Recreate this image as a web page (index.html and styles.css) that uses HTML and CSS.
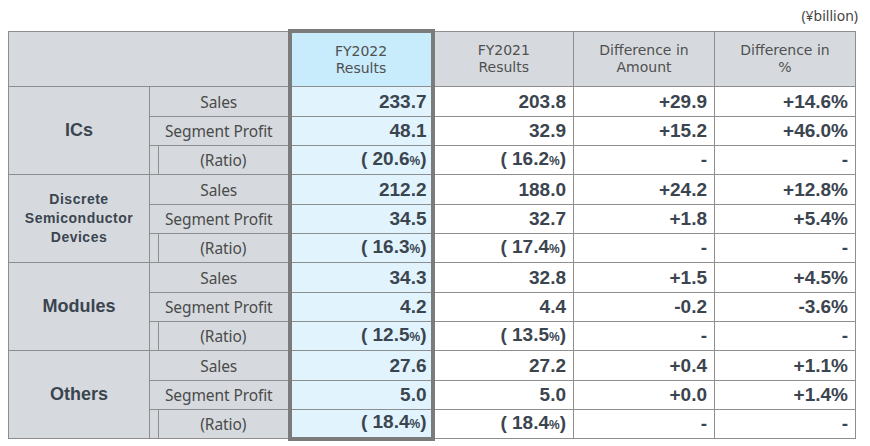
FILE: index.html
```html
<!DOCTYPE html>
<html lang="en">
<head>
<meta charset="utf-8">
<title>Segment Results</title>
<link rel="stylesheet" href="styles.css">
</head>
<body>
<div class="page">
  <div class="unit">(¥billion)</div>
  <table class="results">
    <colgroup>
      <col class="c-cat">
      <col class="c-ind">
      <col class="c-lab">
      <col class="c-hl">
      <col class="c-num">
      <col class="c-num">
      <col class="c-num">
    </colgroup>
    <thead>
      <tr class="head">
        <th colspan="3" class="blank"></th>
        <th class="hl hl-top"><span class="ln">FY2022</span><span class="ln">Results</span></th>
        <th><span class="ln">FY2021</span><span class="ln">Results</span></th>
        <th><span class="ln">Difference in</span><span class="ln">Amount</span></th>
        <th><span class="ln">Difference in</span><span class="ln">%</span></th>
      </tr>
    </thead>
    <tbody>
      <tr class="first">
        <th rowspan="3" class="cat">ICs</th>
        <td colspan="2" class="lab">Sales</td>
        <td class="num hl">233.7</td>
        <td class="num">203.8</td>
        <td class="num">+29.9</td>
        <td class="num">+14.6%</td>
      </tr>
      <tr>
        <td colspan="2" class="lab">Segment Profit</td>
        <td class="num hl">48.1</td>
        <td class="num">32.9</td>
        <td class="num">+15.2</td>
        <td class="num">+46.0%</td>
      </tr>
      <tr>
        <td class="ind"></td>
        <td class="lab">(Ratio)</td>
        <td class="num hl">( 20.6<small>%</small>)</td>
        <td class="num">( 16.2<small>%</small>)</td>
        <td class="num">-</td>
        <td class="num">-</td>
      </tr>

      <tr class="first">
        <th rowspan="3" class="cat cat-small"><span class="ln">Discrete</span><span class="ln">Semiconductor</span><span class="ln">Devices</span></th>
        <td colspan="2" class="lab">Sales</td>
        <td class="num hl">212.2</td>
        <td class="num">188.0</td>
        <td class="num">+24.2</td>
        <td class="num">+12.8%</td>
      </tr>
      <tr>
        <td colspan="2" class="lab">Segment Profit</td>
        <td class="num hl">34.5</td>
        <td class="num">32.7</td>
        <td class="num">+1.8</td>
        <td class="num">+5.4%</td>
      </tr>
      <tr>
        <td class="ind"></td>
        <td class="lab">(Ratio)</td>
        <td class="num hl">( 16.3<small>%</small>)</td>
        <td class="num">( 17.4<small>%</small>)</td>
        <td class="num">-</td>
        <td class="num">-</td>
      </tr>

      <tr class="first">
        <th rowspan="3" class="cat">Modules</th>
        <td colspan="2" class="lab">Sales</td>
        <td class="num hl">34.3</td>
        <td class="num">32.8</td>
        <td class="num">+1.5</td>
        <td class="num">+4.5%</td>
      </tr>
      <tr>
        <td colspan="2" class="lab">Segment Profit</td>
        <td class="num hl">4.2</td>
        <td class="num">4.4</td>
        <td class="num">-0.2</td>
        <td class="num">-3.6%</td>
      </tr>
      <tr>
        <td class="ind"></td>
        <td class="lab">(Ratio)</td>
        <td class="num hl">( 12.5<small>%</small>)</td>
        <td class="num">( 13.5<small>%</small>)</td>
        <td class="num">-</td>
        <td class="num">-</td>
      </tr>

      <tr class="first">
        <th rowspan="3" class="cat">Others</th>
        <td colspan="2" class="lab">Sales</td>
        <td class="num hl">27.6</td>
        <td class="num">27.2</td>
        <td class="num">+0.4</td>
        <td class="num">+1.1%</td>
      </tr>
      <tr>
        <td colspan="2" class="lab">Segment Profit</td>
        <td class="num hl">5.0</td>
        <td class="num">5.0</td>
        <td class="num">+0.0</td>
        <td class="num">+1.4%</td>
      </tr>
      <tr class="last">
        <td class="ind"></td>
        <td class="lab">(Ratio)</td>
        <td class="num hl hl-bottom">( 18.4<small>%</small>)</td>
        <td class="num">( 18.4<small>%</small>)</td>
        <td class="num">-</td>
        <td class="num">-</td>
      </tr>
    </tbody>
  </table>
</div>
</body>
</html>
```

FILE: styles.css
```css
html, body {
  margin: 0;
  padding: 0;
  background: #ffffff;
}

.page {
  width: 870px;
  height: 446px;
  padding-left: 8px;
  box-sizing: border-box;
  font-family: "Noto Sans", "Open Sans", sans-serif;
  color: #444444;
}

.unit {
  height: 29px;
  box-sizing: border-box;
  padding-top: 7px;
  padding-right: 12px;
  width: 870px;
  margin-left: -8px;
  text-align: right;
  font-size: 14px;
  line-height: 18px;
  color: #444444;
}

.results {
  border-collapse: collapse;
  table-layout: fixed;
  width: 847px;
}

.c-cat { width: 141px; }
.c-ind { width: 9px; }
.c-lab { width: 131px; }
.c-hl { width: 143px; }
.c-num { width: 141px; }

.results th,
.results td {
  border: 1px solid #8e8e8e;
  padding: 0;
}

.ln {
  display: block;
}

.head th {
  height: 53px;
  background: #d6dade;
  font-family: "DejaVu Sans", "Noto Sans", sans-serif;
  font-weight: 400;
  font-size: 14px;
  line-height: 17px;
  color: #505050;
  text-align: center;
  vertical-align: middle;
}

.results tbody tr { height: 29px; }
.results tbody tr.first { height: 30px; }

.cat {
  background: #d6dade;
  font-family: "Liberation Sans", Arial, sans-serif;
  font-weight: 700;
  font-size: 18px;
  color: #3b4550;
  text-align: center;
  vertical-align: middle;
}

.cat-small {
  font-size: 14px;
  line-height: 19px;
  letter-spacing: 0.5px;
}

.ind {
  background: #d6dade;
}

.lab {
  background: #d6dade;
  font-size: 15.5px;
  font-weight: 400;
  color: #4a4a4a;
  text-align: center;
  vertical-align: middle;
  line-height: 20px;
  white-space: nowrap;
  letter-spacing: -0.1px;
}

.num {
  background: #ffffff;
  font-family: "Liberation Sans", Arial, sans-serif;
  font-weight: 700;
  font-size: 19px;
  color: #3b4550;
  text-align: right;
  vertical-align: middle;
  padding-right: 7px !important;
  line-height: 20px;
  white-space: nowrap;
}

.num small {
  font-size: 12px;
}

.results .hl {
  border-left: 4px solid #7b7b7b;
  border-right: 4px solid #7b7b7b;
}

.results td.hl {
  background: #e1f4fd;
  padding-right: 4px !important;
}

.results th.hl {
  background: #c8ecfc;
}

.results .hl-top {
  border-top: 4px solid #7b7b7b;
}

.results .hl-bottom {
  border-bottom: 4px solid #7b7b7b;
}
```
